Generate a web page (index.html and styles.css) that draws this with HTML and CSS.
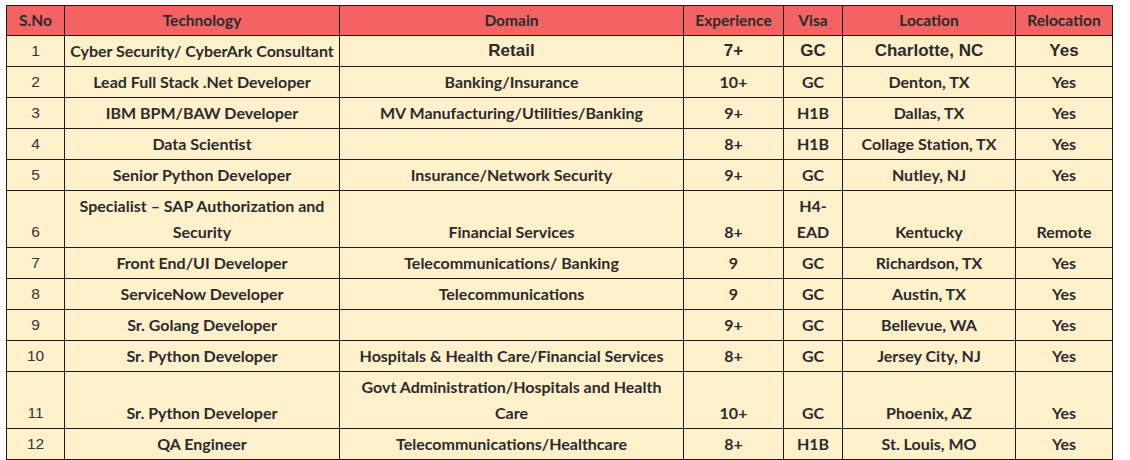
FILE: index.html
```html
<!DOCTYPE html>
<html>
<head>
<meta charset="utf-8">
<link rel="stylesheet" href="styles.css">
</head>
<body>
<table class="jobs">
  <colgroup>
    <col class="c-no"><col class="c-tech"><col class="c-dom"><col class="c-exp"><col class="c-visa"><col class="c-loc"><col class="c-rel">
  </colgroup>
  <thead>
    <tr><th>S.No</th><th>Technology</th><th>Domain</th><th>Experience</th><th>Visa</th><th>Location</th><th>Relocation</th></tr>
  </thead>
  <tbody>
    <tr class="arial"><td class="no">1</td><td class="cal">Cyber Security/ CyberArk Consultant</td><td>Retail</td><td>7+</td><td>GC</td><td>Charlotte, NC</td><td>Yes</td></tr>
    <tr><td class="no">2</td><td>Lead Full Stack .Net Developer</td><td>Banking/Insurance</td><td>10+</td><td>GC</td><td>Denton, TX</td><td>Yes</td></tr>
    <tr><td class="no">3</td><td>IBM BPM/BAW Developer</td><td>MV Manufacturing/Utilities/Banking</td><td>9+</td><td>H1B</td><td>Dallas, TX</td><td>Yes</td></tr>
    <tr><td class="no">4</td><td>Data Scientist</td><td></td><td>8+</td><td>H1B</td><td>Collage Station, TX</td><td>Yes</td></tr>
    <tr><td class="no">5</td><td>Senior Python Developer</td><td>Insurance/Network Security</td><td>9+</td><td>GC</td><td>Nutley, NJ</td><td>Yes</td></tr>
    <tr><td class="no">6</td><td>Specialist – SAP Authorization and Security</td><td>Financial Services</td><td>8+</td><td>H4-<br>EAD</td><td>Kentucky</td><td>Remote</td></tr>
    <tr><td class="no">7</td><td>Front End/UI Developer</td><td>Telecommunications/ Banking</td><td>9</td><td>GC</td><td>Richardson, TX</td><td>Yes</td></tr>
    <tr><td class="no">8</td><td>ServiceNow Developer</td><td>Telecommunications</td><td>9</td><td>GC</td><td>Austin, TX</td><td>Yes</td></tr>
    <tr><td class="no">9</td><td>Sr. Golang Developer</td><td></td><td>9+</td><td>GC</td><td>Bellevue, WA</td><td>Yes</td></tr>
    <tr><td class="no">10</td><td>Sr. Python Developer</td><td>Hospitals &amp; Health Care/Financial Services</td><td>8+</td><td>GC</td><td>Jersey City, NJ</td><td>Yes</td></tr>
    <tr><td class="no">11</td><td>Sr. Python Developer</td><td>Govt Administration/Hospitals and Health Care</td><td>10+</td><td>GC</td><td>Phoenix, AZ</td><td>Yes</td></tr>
    <tr><td class="no">12</td><td>QA Engineer</td><td>Telecommunications/Healthcare</td><td>8+</td><td>H1B</td><td>St. Louis, MO</td><td>Yes</td></tr>
  </tbody>
</table>
</body>
</html>
```
FILE: styles.css
```css
html, body {
  margin: 0;
  background: #ffffff;
}
body {
  padding: 5px 0 0 6px;
}
.jobs {
  border-collapse: collapse;
  table-layout: fixed;
  width: 1107px;
  font-family: Lato, "Open Sans", sans-serif;
  font-weight: 700;
  font-size: 16px;
  color: #2b2b2b;
}
.c-no { width: 58px; }
.c-tech { width: 275px; }
.c-dom { width: 344px; }
.c-exp { width: 100px; }
.c-visa { width: 59px; }
.c-loc { width: 173px; }
.c-rel { width: 97px; }
.jobs th, .jobs td {
  border: 1px solid #1a1a1a;
  text-align: center;
  padding: 2px 4px;
  overflow: hidden;
}
.jobs th {
  background: #f46363;
  line-height: 25px;
  font-weight: 700;
  font-size: 15.5px;
}
.jobs td {
  background: #fff0cc;
  line-height: 26px;
  vertical-align: bottom;
}
.jobs td.no {
  font-family: "Liberation Sans", Arial, sans-serif;
  font-weight: 400;
  font-size: 15.5px;
  color: #333333;
}
.arial td {
  font-family: "Liberation Sans", Arial, sans-serif;
  font-size: 17px;
}
.arial td.cal {
  font-family: Lato, "Open Sans", sans-serif;
  font-size: 16px;
  white-space: nowrap;
}
```
